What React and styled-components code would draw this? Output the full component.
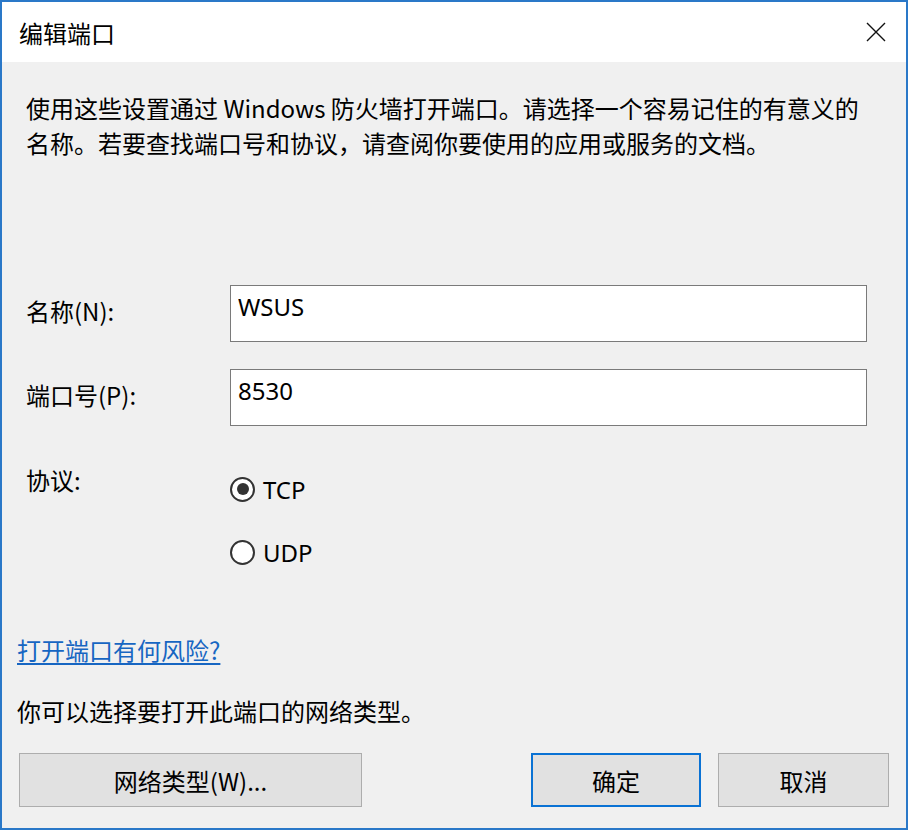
import React, { useState } from "react";
import styled, { createGlobalStyle } from "styled-components";

const GlobalStyle = createGlobalStyle`
  html, body {
    margin: 0;
    padding: 0;
    background: #f0f0f0;
  }
  body {
    font-family: "Noto Sans CJK SC", "Noto Sans", sans-serif;
    color: #000;
  }
`;

const Window = styled.div`
  width: 908px;
  height: 830px;
  box-sizing: border-box;
  border: 2px solid #2a78c8;
  background: #f0f0f0;
  display: flex;
  flex-direction: column;
`;

const TitleBar = styled.div`
  height: 60px;
  flex-shrink: 0;
  background: #fff;
  display: flex;
  align-items: center;
  justify-content: space-between;
  padding: 0 15px 0 17px;
`;

const Title = styled.div`
  font-size: 24px;
  line-height: 30px;
  margin-top: 1px;
`;

const CloseButton = styled.button`
  width: 30px;
  height: 30px;
  padding: 0;
  border: 0;
  background: transparent;
  display: flex;
  align-items: center;
  justify-content: center;
  cursor: pointer;
`;

const Body = styled.div`
  flex: 1;
  display: flex;
  flex-direction: column;
  padding: 28px 17px 19px 15px;
`;

const Description = styled.p`
  margin: 0 0 0 9px;
  font-size: 24px;
  line-height: 35px;
  white-space: nowrap;
`;

const Form = styled.div`
  margin-top: 125px;
  display: grid;
  grid-template-columns: 204px 637px;
  row-gap: 27px;
  padding-left: 9px;
`;

const Label = styled.label`
  font-size: 24px;
  line-height: 30px;
  align-self: ${({ $top }) => ($top ? "start" : "center")};
  margin-top: ${({ $top }) => ($top ? "12px" : "-6px")};
`;

const TextBox = styled.input`
  height: 57px;
  box-sizing: border-box;
  border: 1px solid #7a7a7a;
  background: #fff;
  font-family: "Noto Sans", "Noto Sans CJK SC", sans-serif;
  font-size: 24px;
  padding: 0 0 14px 7px;
  color: #000;
  outline: none;
`;

const RadioGroup = styled.div`
  display: flex;
  flex-direction: column;
  gap: 33px;
  padding-top: 21px;
`;

const RadioOption = styled.label`
  display: flex;
  align-items: center;
  gap: 8px;
  height: 30px;
  font-family: "Noto Sans", sans-serif;
  font-size: 24px;
  cursor: pointer;
`;

const RadioDot = styled.span`
  width: 25px;
  height: 25px;
  box-sizing: border-box;
  border-radius: 50%;
  border: 2px solid #333;
  background: #fff;
  display: flex;
  align-items: center;
  justify-content: center;

  &::after {
    content: "";
    width: 12px;
    height: 12px;
    border-radius: 50%;
    background: ${({ $checked }) => ($checked ? "#333" : "transparent")};
  }
`;

const Link = styled.a`
  margin-top: 68px;
  font-size: 24px;
  line-height: 30px;
  color: #1766c2;
  text-decoration: underline;
  text-underline-offset: 3px;
  align-self: flex-start;
  cursor: pointer;
`;

const Note = styled.div`
  margin-top: 31px;
  font-size: 24px;
  line-height: 30px;
`;

const ButtonRow = styled.div`
  margin-top: 27px;
  display: flex;
  align-items: center;
  padding-left: 2px;
`;

const Button = styled.button`
  width: ${({ $w }) => $w}px;
  height: 54px;
  box-sizing: border-box;
  background: #e1e1e1;
  border: ${({ $default }) => ($default ? "2px solid #0a72d4" : "1px solid #adadad")};
  font-family: "Noto Sans CJK SC", "Noto Sans", sans-serif;
  font-size: 24px;
  color: #000;
  padding: 0;
  cursor: pointer;
  margin-left: ${({ $gap }) => $gap || 0}px;
`;

export default function App() {
  const [protocol, setProtocol] = useState("TCP");

  return (
    <>
      <GlobalStyle />
      <Window>
        <TitleBar>
          <Title>编辑端口</Title>
          <CloseButton aria-label="关闭">
            <svg width="20" height="20" viewBox="0 0 20 20">
              <path d="M1 1 L19 19 M19 1 L1 19" stroke="#111" strokeWidth="1.4" />
            </svg>
          </CloseButton>
        </TitleBar>
        <Body>
          <Description>
            使用这些设置通过 Windows 防火墙打开端口。请选择一个容易记住的有意义的
            <br />
            名称。若要查找端口号和协议，请查阅你要使用的应用或服务的文档。
          </Description>

          <Form>
            <Label>名称(N):</Label>
            <TextBox defaultValue="WSUS" />
            <Label>端口号(P):</Label>
            <TextBox defaultValue="8530" />
            <Label $top>协议:</Label>
            <RadioGroup>
              {["TCP", "UDP"].map((p) => (
                <RadioOption key={p} onClick={() => setProtocol(p)}>
                  <RadioDot $checked={protocol === p} />
                  {p}
                </RadioOption>
              ))}
            </RadioGroup>
          </Form>

          <Link>打开端口有何风险?</Link>
          <Note>你可以选择要打开此端口的网络类型。</Note>

          <ButtonRow>
            <Button $w={343}>网络类型(W)...</Button>
            <Button $w={170} $gap={169} $default>
              确定
            </Button>
            <Button $w={171} $gap={17}>
              取消
            </Button>
          </ButtonRow>
        </Body>
      </Window>
    </>
  );
}
